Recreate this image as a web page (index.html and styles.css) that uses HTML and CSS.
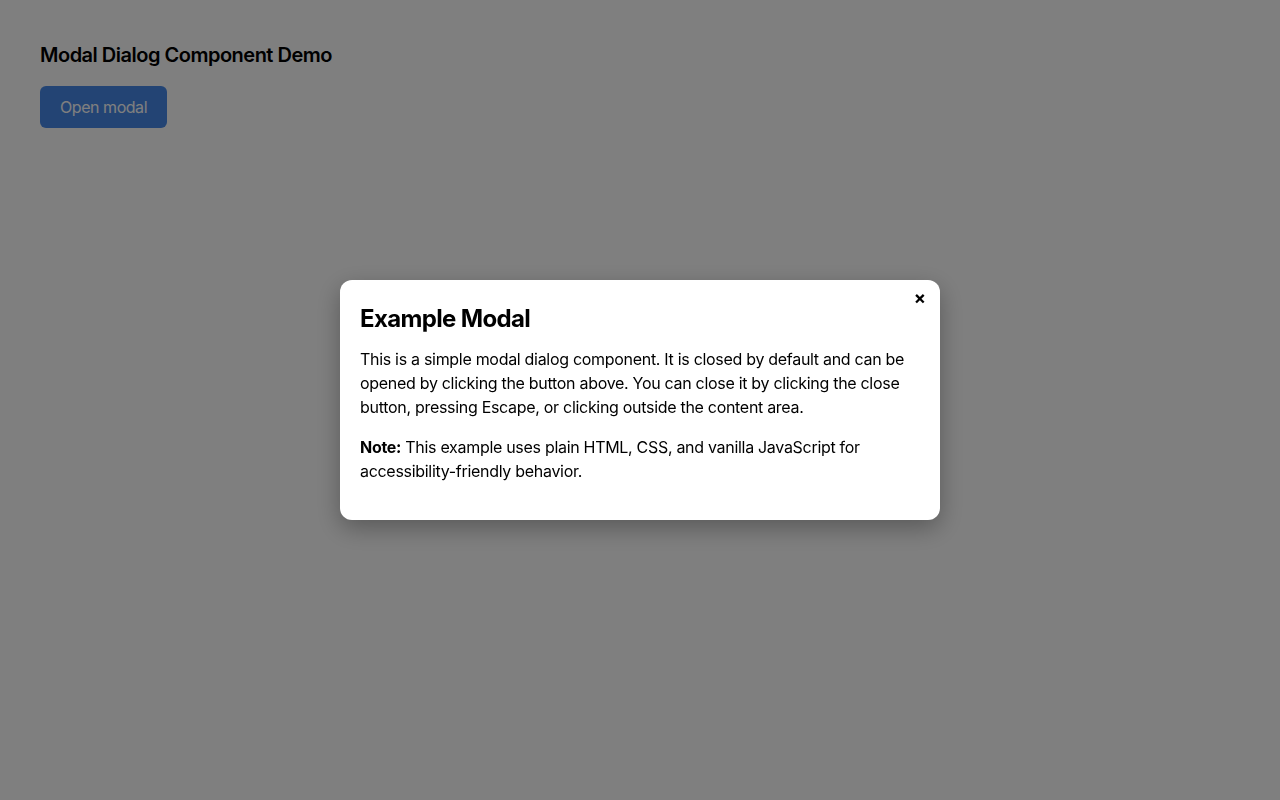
FILE: index.html
```html
<!DOCTYPE html>
<html lang="en">
<head>
    <meta charset="UTF-8">
    <meta name="viewport" content="width=device-width, initial-scale=1.0">
    <title>Modal Dialog Component Demo</title>
    <link rel="stylesheet" href="styles.css">
</head>
<body>
    <h1>Modal Dialog Component Demo</h1>
    <button type="button" class="btn" id="openModal">Open modal</button>

    <div class="modal-backdrop" id="modal">
        <div class="modal" role="dialog" aria-modal="true" aria-labelledby="modalTitle">
            <button type="button" class="modal-close" id="closeModal" aria-label="Close">&times;</button>
            <h2 id="modalTitle">Example Modal</h2>
            <p>This is a simple modal dialog component. It is closed by default and can be opened by clicking the button above. You can close it by clicking the close button, pressing Escape, or clicking outside the content area.</p>
            <p><strong>Note:</strong> This example uses plain HTML, CSS, and vanilla JavaScript for accessibility-friendly behavior.</p>
        </div>
    </div>
</body>
</html>
```

FILE: styles.css
```css
body {
    margin: 0;
    padding: 40px;
    font-family: 'Inter', 'Liberation Sans', sans-serif;
    background: #fff;
    color: #000;
}

h1 {
    margin: 0 0 16px;
    font-size: 20px;
    font-weight: 600;
    line-height: 30px;
    letter-spacing: -0.5px;
}

.btn {
    padding: 10px 20px;
    font-family: inherit;
    font-size: 16px;
    line-height: 22px;
    letter-spacing: -0.45px;
    color: #fff;
    background: #4789e8;
    border: none;
    border-radius: 6px;
    cursor: pointer;
}

.modal-backdrop {
    position: fixed;
    inset: 0;
    background: rgba(0, 0, 0, 0.5);
    display: flex;
    align-items: center;
    justify-content: center;
}

.modal {
    position: relative;
    width: 560px;
    padding: 20px 20px 21px;
    background: #fff;
    border-radius: 12px;
    box-shadow: 0 8px 24px rgba(0, 0, 0, 0.3);
}

.modal h2 {
    margin: 0 0 10px;
    font-size: 24px;
    font-weight: 700;
    line-height: 37px;
    letter-spacing: -0.65px;
}

.modal p {
    margin: 0 0 16px;
    font-size: 16px;
    line-height: 24px;
    letter-spacing: -0.3px;
}

.modal-close {
    position: absolute;
    top: 7px;
    right: 10px;
    padding: 2px 4px;
    font-family: inherit;
    font-size: 18px;
    font-weight: 700;
    line-height: 18px;
    background: none;
    border: none;
    color: #000;
    cursor: pointer;
}
```
